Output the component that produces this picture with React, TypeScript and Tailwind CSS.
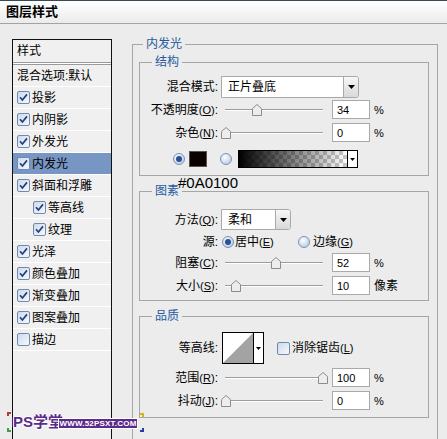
import React from "react";

function Check({ checked = true }: { checked?: boolean }) {
  return (
    <svg width="13" height="13" viewBox="0 0 13 13" className="shrink-0">
      <defs>
        <linearGradient id="cbg" x1="0" y1="0" x2="1" y2="1">
          <stop offset="0" stopColor="#cbd8ea" />
          <stop offset="1" stopColor="#f7faff" />
        </linearGradient>
      </defs>
      <rect x="0.5" y="0.5" width="12" height="12" rx="1.5" fill="url(#cbg)" stroke="#7189ab" />
      {checked && <path d="M3 6.3 L5.4 9 L10 3.4" fill="none" stroke="#233f7a" strokeWidth="1.7" />}
    </svg>
  );
}

function Radio({ on = false }: { on?: boolean }) {
  return (
    <svg width="12" height="12" viewBox="0 0 12 12" className="shrink-0">
      <defs>
        <radialGradient id="rg" cx="0.4" cy="0.35" r="0.7">
          <stop offset="0" stopColor="#ffffff" />
          <stop offset="1" stopColor="#b4c9e4" />
        </radialGradient>
      </defs>
      <circle cx="6" cy="6" r="5.5" fill="url(#rg)" stroke="#7d93b3" />
      {on && <circle cx="6" cy="6" r="3" fill="#2a4f95" />}
    </svg>
  );
}

function Thumb() {
  return (
    <svg width="10" height="12" viewBox="0 0 10 12">
      <path d="M0.5 4.5 L5 0.5 L9.5 4.5 V11.5 H0.5 Z" fill="#ededed" stroke="#8c8c8c" />
    </svg>
  );
}

function Slider({ pos }: { pos: number }) {
  return (
    <div className="relative ml-[7px] w-[98px] h-[12px] shrink-0">
      <div className="absolute left-0 right-0 top-[5px] h-[2px] border-t border-[#9d9d9d] bg-white" />
      <div className="absolute top-0" style={{ left: pos - 5 }}>
        <Thumb />
      </div>
    </div>
  );
}

function Num({ v }: { v: string }) {
  return (
    <div className="ml-[9px] w-[38px] h-[19px] border border-[#a9a9a9] bg-white flex items-center pl-[4px] text-[11px] shrink-0">
      {v}
    </div>
  );
}

function Label({ t, k }: { t: string; k?: string }) {
  return (
    <div className="w-[78px] shrink-0 text-right whitespace-nowrap">
      {t}
      {k && (
        <span className="text-[11px]">
          (<u>{k}</u>)
        </span>
      )}
      :
    </div>
  );
}

function DArrow() {
  return (
    <svg width="7" height="4" viewBox="0 0 7 4">
      <path d="M0 0 H7 L3.5 4 Z" fill="#000" />
    </svg>
  );
}

function Dropdown({ w, text, h }: { w: string; text: string; h: string }) {
  return (
    <div className={`ml-[3px] ${w} ${h} border border-[#a9a9a9] bg-white flex items-stretch rounded-r-[3px] shrink-0`}>
      <div className="flex-1 flex items-center pl-[6px]">{text}</div>
      <div className="w-[15px] border-l border-[#a9a9a9] bg-gradient-to-b from-[#f7f7f7] to-[#d9d9d9] rounded-r-[3px] flex items-center justify-center">
        <DArrow />
      </div>
    </div>
  );
}

const items = [
  { t: "投影", c: true },
  { t: "内阴影", c: true },
  { t: "外发光", c: true },
  { t: "内发光", c: true, sel: true },
  { t: "斜面和浮雕", c: true },
  { t: "等高线", c: true, ind: true },
  { t: "纹理", c: true, ind: true },
  { t: "光泽", c: true },
  { t: "颜色叠加", c: true },
  { t: "渐变叠加", c: true },
  { t: "图案叠加", c: true },
  { t: "描边", c: false },
];

export default function App() {
  return (
    <div className="relative w-[447px] h-[439px] overflow-hidden bg-[#ececec] text-black text-[12px] leading-[14px] font-['Liberation_Sans','Noto_Sans_CJK_SC',sans-serif]">
      {/* title bar */}
      <div className="h-[24px] border-t border-t-[#3b4856] border-b border-b-[#a3a3a3] bg-gradient-to-b from-white to-[#ebebeb] flex items-center pl-[6px] font-bold text-[13px]">
        图层样式
      </div>

      <div className="flex items-start">
        {/* left list */}
        <div className="mt-[15px] ml-[12px] w-[100px] h-[420px] border border-[#111] bg-[#f0f0f0] shrink-0">
          <div className="h-[22px] flex items-center pl-[4px]">样式</div>
          <div className="h-[3px] border-y border-[#9a9a9a] bg-white" />
          <div className="h-[22px] border-b border-white flex items-center pl-[4px] whitespace-nowrap">混合选项:默认</div>
          {items.map((it) => (
            <div
              key={it.t}
              className={`h-[22px] border-b border-white flex items-center ${it.ind ? "pl-[20px]" : "pl-[4px]"} ${it.sel ? "bg-[#7896c4]" : ""}`}
            >
              <Check checked={it.c} />
              <span className="ml-[2px] whitespace-nowrap">{it.t}</span>
            </div>
          ))}
        </div>

        {/* right side */}
        <fieldset className="mt-[12px] ml-[20px] w-[306px] border border-[#a6a6a6] pb-[40px] min-w-0">
          <legend className="ml-[10px] px-[3px] text-[#1f5aa0] leading-[16px]">内发光</legend>

          {/* 结构 */}
          <fieldset className="mt-[2px] ml-[6px] w-[290px] border border-[#a6a6a6] pb-[7px] min-w-0">
            <legend className="ml-[12px] px-[3px] text-[#1f5aa0] leading-[16px]">结构</legend>
            <div className="mt-[6px] h-[22px] flex items-center">
              <Label t="混合模式" />
              <Dropdown w="w-[138px]" h="h-[22px]" text="正片叠底" />
            </div>
            <div className="mt-[2px] h-[19px] flex items-center">
              <Label t="不透明度" k="O" />
              <Slider pos={32} />
              <Num v="34" />
              <span className="ml-[4px] text-[11px]">%</span>
            </div>
            <div className="mt-[4px] h-[19px] flex items-center">
              <Label t="杂色" k="N" />
              <Slider pos={1} />
              <Num v="0" />
              <span className="ml-[4px] text-[11px]">%</span>
            </div>
            <div className="mt-[8px] h-[18px] flex items-center pl-[33px]">
              <Radio on />
              <div className="ml-[4px] w-[18px] h-[16px] bg-[#0a0100] border border-[#555]" />
              <div className="ml-[13px]">
                <Radio />
              </div>
              <div className="ml-[6px] w-[120px] h-[18px] border border-black flex">
                <div className="flex-1 relative bg-white bg-[conic-gradient(#c8c8c8_25%,#ffffff_0_50%,#c8c8c8_0_75%,#ffffff_0)] bg-[length:8px_8px]">
                  <div className="absolute inset-0 bg-gradient-to-r from-black to-transparent" />
                </div>
                <div className="w-[10px] border-l border-black bg-white flex items-center justify-center">
                  <svg width="5" height="3" viewBox="0 0 5 3">
                    <path d="M0 0 H5 L2.5 3 Z" fill="#000" />
                  </svg>
                </div>
              </div>
            </div>
          </fieldset>

          {/* 图素 */}
          <fieldset className="mt-[7px] ml-[6px] w-[290px] border border-[#a6a6a6] pb-[5px] min-w-0">
            <legend className="ml-[12px] px-[3px] text-[#1f5aa0] leading-[16px]">图素</legend>
            <div className="mt-[10px] h-[21px] flex items-center">
              <Label t="方法" k="Q" />
              <Dropdown w="w-[70px]" h="h-[21px]" text="柔和" />
            </div>
            <div className="mt-[5px] h-[14px] flex items-center">
              <Label t="源" />
              <div className="ml-[4px]">
                <Radio on />
              </div>
              <span className="ml-[1px] w-[63px] whitespace-nowrap">
                居中<span className="text-[11px]">(<u>E</u>)</span>
              </span>
              <Radio />
              <span className="ml-[3px] whitespace-nowrap">
                边缘<span className="text-[11px]">(<u>G</u>)</span>
              </span>
            </div>
            <div className="mt-[4px] h-[19px] flex items-center">
              <Label t="阻塞" k="C" />
              <Slider pos={51} />
              <Num v="52" />
              <span className="ml-[4px] text-[11px]">%</span>
            </div>
            <div className="mt-[4px] h-[19px] flex items-center">
              <Label t="大小" k="S" />
              <Slider pos={11} />
              <Num v="10" />
              <span className="ml-[4px]">像素</span>
            </div>
          </fieldset>

          {/* 品质 */}
          <fieldset className="mt-[7px] ml-[6px] w-[290px] border border-[#a6a6a6] pb-[7px] min-w-0">
            <legend className="ml-[12px] px-[3px] text-[#1f5aa0] leading-[16px]">品质</legend>
            <div className="mt-[8px] h-[32px] flex items-center">
              <Label t="等高线" />
              <div className="ml-[4px] w-[42px] h-[32px] border border-black bg-white flex shrink-0">
                <svg width="30" height="30" viewBox="0 0 30 30">
                  <rect width="30" height="30" fill="#fff" />
                  <path d="M0 30 L30 0 V30 Z" fill="#a3a3a3" />
                </svg>
                <div className="w-[10px] border-l border-black flex items-center justify-center">
                  <svg width="5" height="3" viewBox="0 0 5 3">
                    <path d="M0 0 H5 L2.5 3 Z" fill="#000" />
                  </svg>
                </div>
              </div>
              <div className="ml-[13px]">
                <Check checked={false} />
              </div>
              <span className="ml-[2px] whitespace-nowrap">
                消除锯齿<span className="text-[11px]">(<u>L</u>)</span>
              </span>
            </div>
            <div className="mt-[4px] h-[19px] flex items-center">
              <Label t="范围" k="R" />
              <Slider pos={98} />
              <Num v="100" />
              <span className="ml-[4px] text-[11px]">%</span>
            </div>
            <div className="mt-[4px] h-[19px] flex items-center">
              <Label t="抖动" k="J" />
              <Slider pos={1} />
              <Num v="0" />
              <span className="ml-[4px] text-[11px]">%</span>
            </div>
          </fieldset>
        </fieldset>
      </div>

      {/* colour annotation */}
      <div className="absolute left-[178px] top-[175px] text-[15px] leading-[16px] font-['Liberation_Sans',sans-serif]">
        #0A0100
      </div>

      {/* watermark */}
      <div className="absolute left-[7px] top-[412px] w-[4px] h-[4px] border-l-2 border-t-2 border-[#b33a3a]" />
      <div className="absolute left-[7px] top-[428px] w-[4px] h-[4px] border-l-2 border-b-2 border-[#3aa04a]" />
      <div className="absolute left-[140px] top-[413px] w-[4px] h-[4px] border-r-2 border-t-2 border-[#d8b020]" />
      <div className="absolute left-[140px] top-[428px] w-[4px] h-[4px] border-r-2 border-b-2 border-[#2a3a9a]" />
      <div className="absolute left-[13px] top-[413px] text-[15px] leading-[17px] font-bold text-[#5b2c8b] [text-shadow:1px_0_0_#fff,-1px_0_0_#fff,0_1px_0_#fff,0_-1px_0_#fff] font-['Liberation_Sans','Noto_Sans_CJK_SC',sans-serif]">
        PS学堂
      </div>
      <div className="absolute left-[58px] top-[418px] w-[80px] h-[11px] bg-[#5b2c8b] border border-white flex items-center justify-center text-white text-[8px] leading-[9px] font-bold tracking-[0.2px]">
        WWW.52PSXT.COM
      </div>
    </div>
  );
}
